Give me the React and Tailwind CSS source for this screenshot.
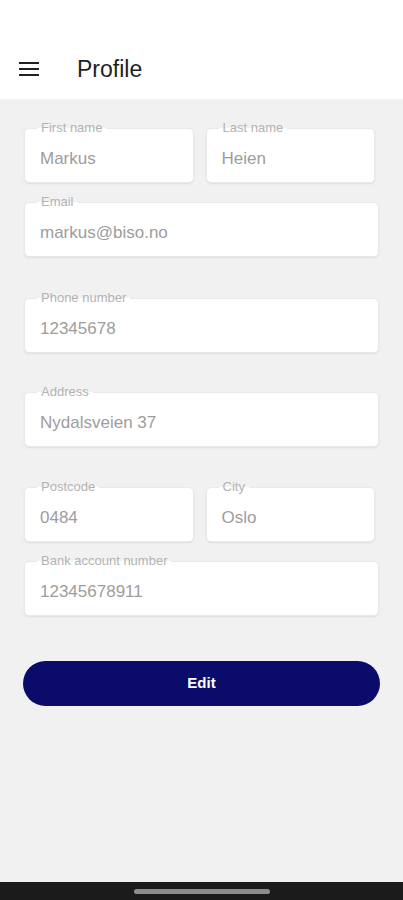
import React from "react";

function Field({ label, value, className = "" }) {
  return (
    <div className={"relative h-[55px] rounded-[5px] bg-white border border-[#e9e9e9] shadow-[0_1px_2px_rgba(0,0,0,0.08)] " + className}>
      <span className="absolute left-[12px] top-[-8px] px-[4px] text-[13px] leading-[14px] text-[#b3b3b3] bg-[linear-gradient(#f1f1f1_50%,#ffffff_50%)]">
        {label}
      </span>
      <div className="pl-[15px] pt-[20px] text-[17px] leading-[20px] text-[#9d9d9d]">{value}</div>
    </div>
  );
}

export default function App() {
  return (
    <div className="w-[403px] h-[900px] flex flex-col bg-[#f1f1f1] font-['Liberation_Sans',Arial,sans-serif] overflow-hidden">
      <header className="h-[99px] shrink-0 bg-white flex items-center pt-[38px] pl-[19px]">
        <div className="flex flex-col gap-[4px] w-[20px]">
          <span className="block h-[2px] bg-[#222]" />
          <span className="block h-[2px] bg-[#222]" />
          <span className="block h-[2px] bg-[#222]" />
        </div>
        <h1 className="ml-[38px] text-[23px] leading-[26px] text-[#1f1f1f]">Profile</h1>
      </header>

      <main className="flex-1 px-[24px] pt-[29px]">
        <div className="flex gap-[12px] w-[351px]">
          <Field label="First name" value="Markus" className="flex-1" />
          <Field label="Last name" value="Heien" className="flex-1" />
        </div>
        <Field label="Email" value="markus@biso.no" className="mt-[19px]" />
        <Field label="Phone number" value="12345678" className="mt-[41px]" />
        <Field label="Address" value="Nydalsveien 37" className="mt-[39px]" />
        <div className="flex gap-[12px] w-[351px] mt-[40px]">
          <Field label="Postcode" value="0484" className="flex-1" />
          <Field label="City" value="Oslo" className="flex-1" />
        </div>
        <Field label="Bank account number" value="12345678911" className="mt-[19px]" />

        <button className="mt-[45px] ml-[-1px] w-[357px] h-[45px] rounded-full bg-[#0b0b6a] text-white text-[15px] font-bold flex items-center justify-center">
          Edit
        </button>
      </main>

      <footer className="h-[18px] shrink-0 bg-[#1b1b1b] flex items-center justify-center">
        <span className="block w-[136px] h-[5px] rounded-full bg-[#8c8c8c]" />
      </footer>
    </div>
  );
}
